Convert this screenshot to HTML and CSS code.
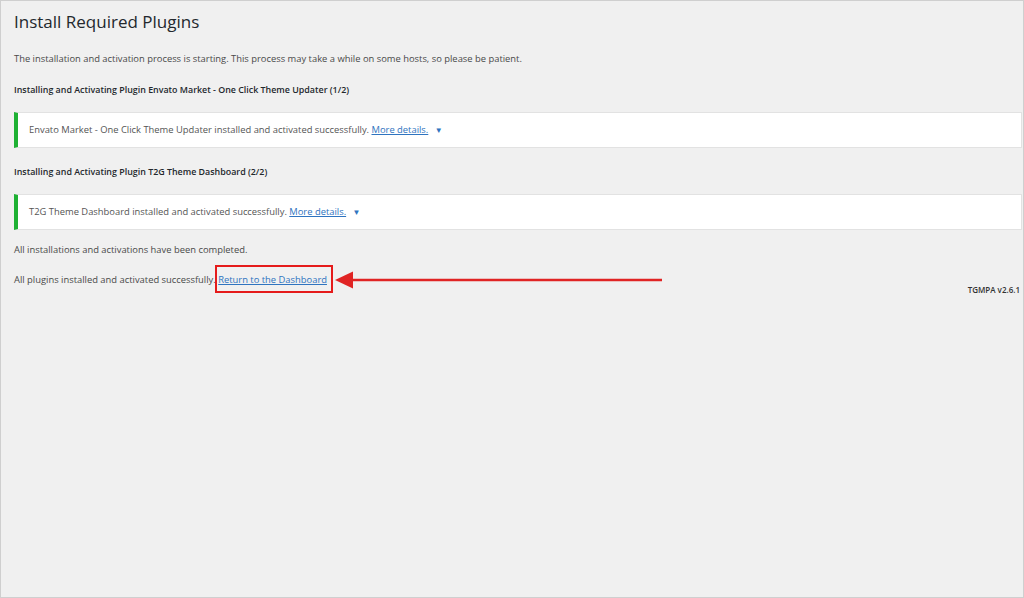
FILE: index.html
```html
<!DOCTYPE html>
<html lang="en">
<head>
    <meta charset="UTF-8">
    <title>Install Required Plugins</title>
    <link rel="stylesheet" href="styles.css">
</head>
<body>
    <div class="wrap">
        <h1>Install Required Plugins</h1>

        <p>The installation and activation process is starting. This process may take a while on some hosts, so please be patient.</p>

        <h2>Installing and Activating Plugin Envato Market - One Click Theme Updater (1/2)</h2>
        <div class="notice">
            Envato Market - One Click Theme Updater installed and activated successfully. <a href="#">More details.</a> <span class="caret">&#9660;</span>
        </div>

        <h2>Installing and Activating Plugin T2G Theme Dashboard (2/2)</h2>
        <div class="notice">
            T2G Theme Dashboard installed and activated successfully. <a href="#">More details.</a> <span class="caret">&#9660;</span>
        </div>

        <p class="done">All installations and activations have been completed.</p>

        <p class="last">All plugins installed and activated successfully. <span class="callout"><a href="#">Return to the Dashboard</a><svg class="arrow" width="330" height="24" viewBox="0 0 330 24"><line x1="14" y1="12" x2="327" y2="12" stroke="#e02424" stroke-width="2.6"/><polygon points="0,12 18,3.5 18,20.5" fill="#e02424"/></svg></span></p>

        <div class="version">TGMPA v2.6.1</div>
    </div>
</body>
</html>
```

FILE: styles.css
```css
html, body {
    margin: 0;
    padding: 0;
}

body {
    font-family: "Open Sans", "Noto Sans", sans-serif;
    font-size: 9.4px;
    color: #4a4a4a;
    background: #f0f0f0;
}

.wrap {
    box-sizing: border-box;
    height: 598px;
    border: 1px solid #cfcfcf;
    padding: 0 1px 0 13px;
}

h1 {
    margin: 0;
    padding: 8px 0 0;
    font-size: 17px;
    font-weight: 400;
    line-height: 26px;
    color: #23282d;
}

p {
    margin: 16px 0 0;
    line-height: 16px;
}

h2 {
    margin: 15px 0 0;
    font-size: 8.9px;
    font-weight: 600;
    line-height: 16px;
    color: #23282d;
}

.notice {
    margin: 14px 0 0;
    padding: 9px 12px 9px 11px;
    line-height: 16px;
    background: #fff;
    border: 1px solid #e2e2e2;
    border-left: 4px solid #1eb133;
    color: #555;
}

.notice + h2 {
    margin-top: 16px;
}

a {
    color: #2f74c0;
    text-decoration: underline;
}

.caret {
    margin-left: 4px;
    font-size: 8px;
    color: #2f74c0;
}

.done {
    margin-top: 12px;
}

.last {
    margin-top: 14px;
}

.callout {
    position: relative;
}

.callout::after {
    content: "";
    position: absolute;
    left: -3px;
    right: -6px;
    top: -8px;
    bottom: -7px;
    border: 2px solid #e51b1b;
}

.arrow {
    position: absolute;
    left: calc(100% + 8px);
    top: -5px;
}

.version {
    margin-top: -4px;
    text-align: right;
    font-size: 8px;
    font-weight: 600;
    color: #333;
    padding-right: 2px;
}
```
